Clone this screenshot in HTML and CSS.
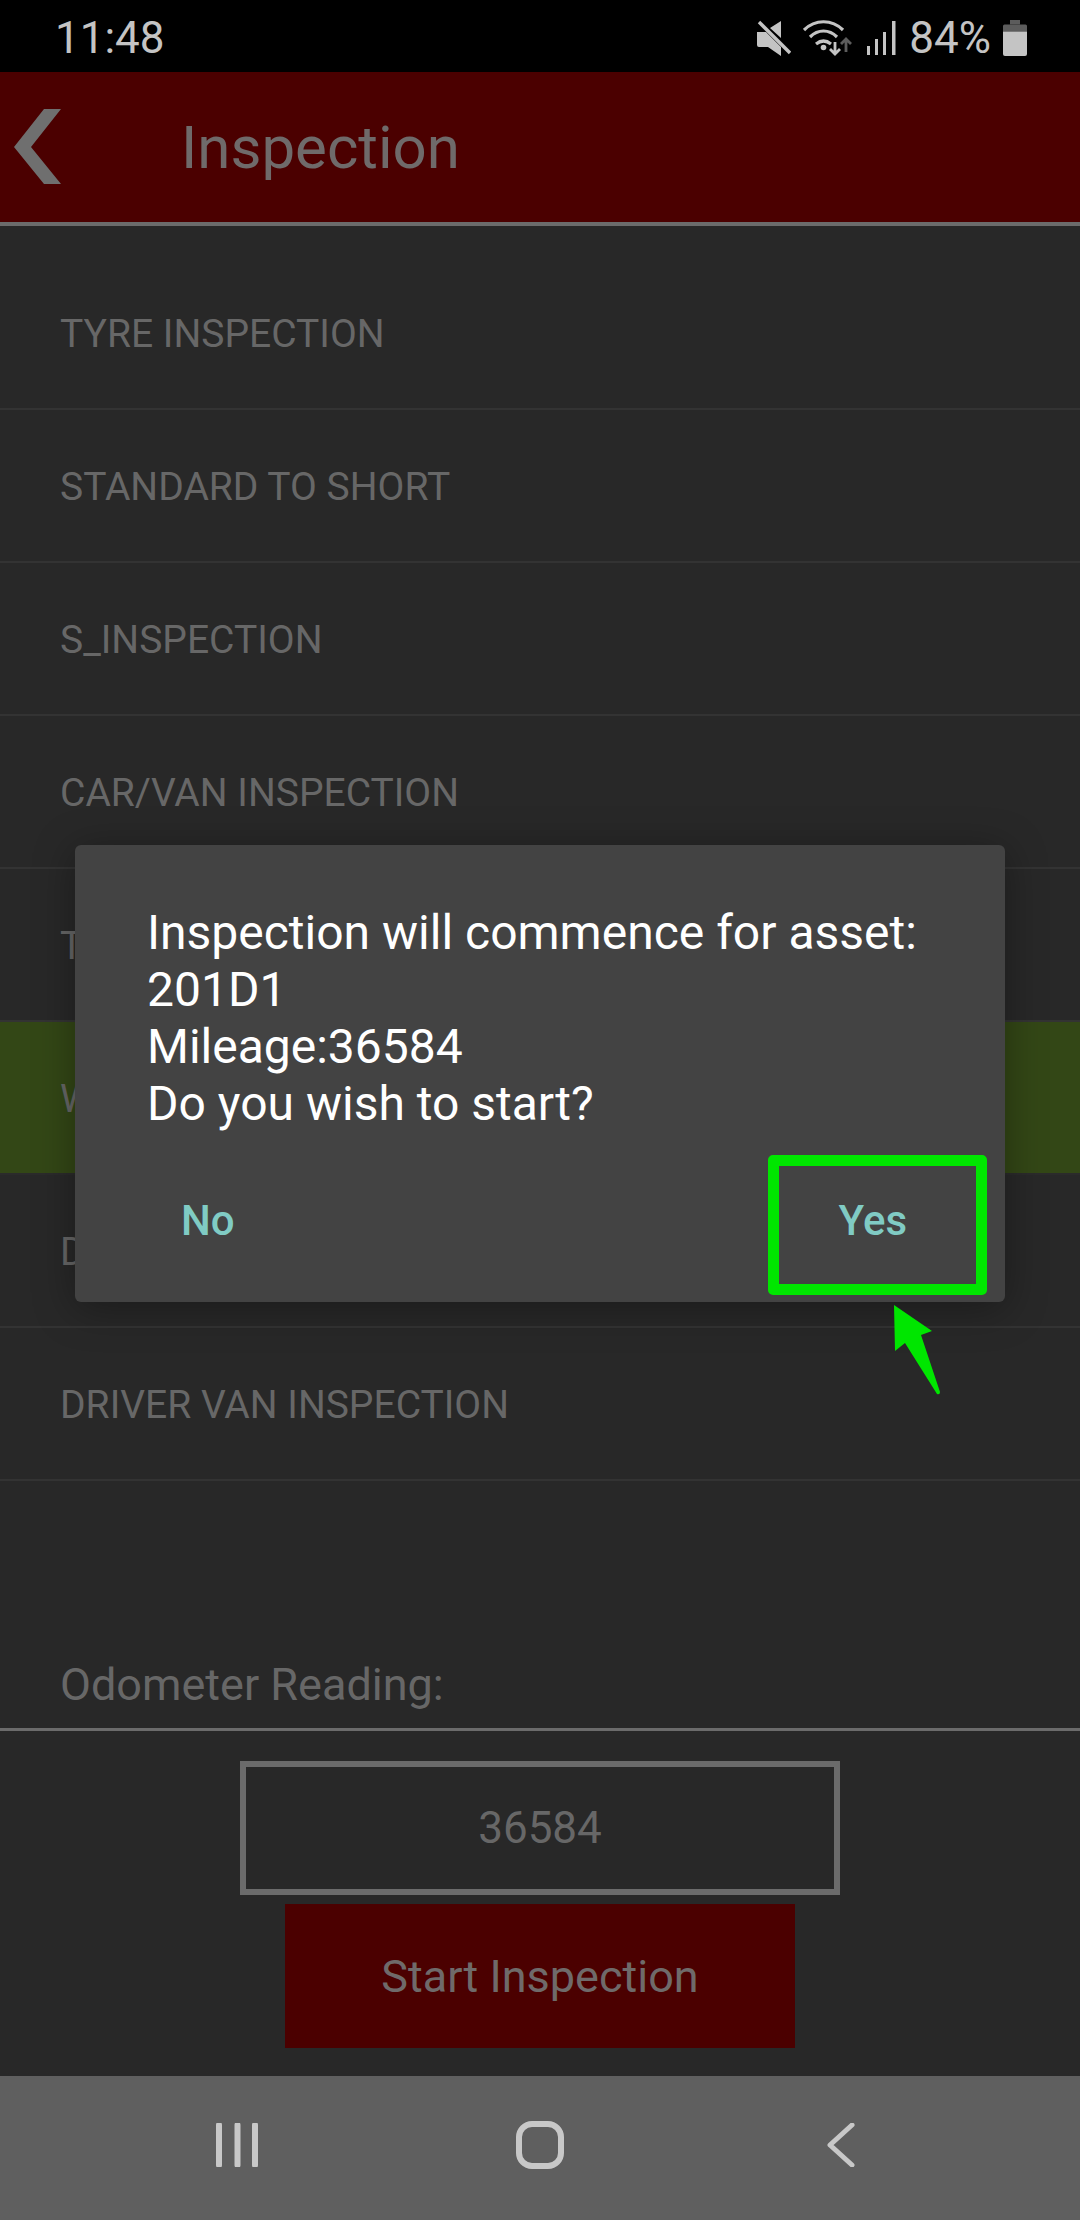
FILE: index.html
```html
<!DOCTYPE html>
<html lang="en">
<head>
  <meta charset="UTF-8">
  <meta name="viewport" content="width=device-width, initial-scale=1">
  <title>Inspection</title>
  <link rel="stylesheet" href="styles.css">
</head>
<body>
  <div class="screen">
    <!-- status bar -->
    <div class="statusbar">
      <span class="clock">11:48</span>
      <div class="status-icons">
        <svg class="ic-mute" width="34" height="36" viewBox="0 0 34 36">
          <path d="M0 12h9l15 15v9l-13-9H2a2 2 0 0 1-2-2zM13 8L24 1v17z" fill="#c4c4c4"/>
          <path d="M2 2l31 31" stroke="#c4c4c4" stroke-width="3.4" fill="none"/>
        </svg>
        <svg class="ic-wifi" width="50" height="36" viewBox="0 0 50 36">
          <path d="M1 10C12-1 29-1 40 10M7 17c8-8 19-8 27 0M13 24c5-4 10-4 15 0" stroke="#c4c4c4" stroke-width="3.2" fill="none"/>
          <circle cx="20.500" cy="27.500" r="2.800" fill="#c4c4c4"/>
          <path d="M32 22v10M27 29l5 5 5-5" stroke="#c4c4c4" stroke-width="2.800" fill="none"/>
          <path d="M43 32V20M38 24l5-5 5 5" stroke="#5c5c5c" stroke-width="2.800" fill="none"/>
        </svg>
        <svg class="ic-signal" width="32" height="36" viewBox="0 0 32 36">
          <path d="M2 26h3v9H2zM10 19h3v16h-3zM18 12h3v23h-3zM27 1h3.500v34H27z" fill="#c4c4c4"/>
        </svg>
        <span class="battery-pct">84%</span>
        <svg class="ic-battery" width="24" height="36" viewBox="0 0 24 36">
          <path d="M7 0h10v4.500H7z" fill="#5c5c5c"/>
          <path d="M0 6a1.500 1.500 0 0 1 1.500-1.500h21A1.500 1.500 0 0 1 24 6v5.500H0z" fill="#5c5c5c"/>
          <path d="M0 11.500h24V34a2 2 0 0 1-2 2H2a2 2 0 0 1-2-2z" fill="#c4c4c4"/>
        </svg>
      </div>
    </div>

    <!-- header -->
    <header class="topbar">
      <svg class="back" width="48" height="76" viewBox="0 0 48 76">
        <path d="M47 0H30L0 38l30 37h17L17 38z" fill="#6f6f6f"/>
      </svg>
      <h1>Inspection</h1>
    </header>

    <!-- list of inspections -->
    <ul class="list">
      <li>TYRE INSPECTION</li>
      <li>STANDARD TO SHORT</li>
      <li>S_INSPECTION</li>
      <li>CAR/VAN INSPECTION</li>
      <li>TRUCK INSPECTION</li>
      <li class="selected">WEEKLY INSPECTION</li>
      <li>DRIVER INSPECTION</li>
      <li>DRIVER VAN INSPECTION</li>
    </ul>

    <div class="odo">
      <label class="odo-label">Odometer Reading:</label>
      <div class="odo-box">36584</div>
      <div class="start-btn">Start Inspection</div>
    </div>

    <!-- nav bar -->
    <nav class="navbar">
      <svg width="42" height="44" viewBox="0 0 42 44">
        <path d="M3 2v40M21.500 2v40M39 2v40" stroke="#c8c8c8" stroke-width="6" stroke-linecap="round" fill="none"/>
      </svg>
      <svg class="nav-home" width="48" height="48" viewBox="0 0 48 48">
        <rect x="3" y="3" width="42" height="42" rx="13" stroke="#c8c8c8" stroke-width="6" fill="none"/>
      </svg>
      <svg width="28" height="44" viewBox="0 0 28 44">
        <path d="M25 2L3 22l22 20" stroke="#c8c8c8" stroke-width="5" stroke-linecap="round" stroke-linejoin="round" fill="none"/>
      </svg>
    </nav>

    <!-- confirm dialog -->
    <div class="dialog">
      <p class="dialog-msg">Inspection will commence for asset:<br>201D1<br>Mileage:36584<br>Do you wish to start?</p>
      <div class="dialog-actions">
        <span class="dialog-btn">No</span>
        <span class="dialog-btn">Yes</span>
      </div>
    </div>

    <!-- annotation over the Yes button -->
    <div class="highlight"></div>
    <svg class="arrow" width="52" height="92" viewBox="0 0 52 92">
      <path d="M3 1L41 27 30 31 49 88Q49 91 46 90L14 39 4 47Z" fill="#00e600"/>
    </svg>
  </div>
</body>
</html>
```

FILE: styles.css
```css
* {box-sizing:border-box;margin:0;padding:0;}
body {background:#282828;font-family:'Roboto',sans-serif;}

.screen {position:relative;width:1080px;height:2220px;overflow:hidden;display:flex;flex-direction:column;background:#282828;}

.statusbar {height:72px;background:#000;color:#c4c4c4;display:flex;align-items:center;justify-content:space-between;padding:3px 53px 0 55px;}
.clock {font-size:44px;}
.status-icons {display:flex;align-items:center;gap:12px;}
.battery-pct {font-size:44px;}

.topbar {height:154px;background:#4b0000;border-bottom:4px solid #6b6b6b;display:flex;align-items:center;padding:0 0 0 14px;}
.back {flex:none;}
.topbar h1 {font-size:60px;font-weight:400;color:#6f6a6a;margin-left:119px;}

.list {list-style:none;padding-top:31px;}
.list li {height:153px;display:flex;align-items:center;padding:2px 60px 0;font-size:39px;color:#676767;border-bottom:2px solid #333;}
.list li.selected {background:#334716;border-bottom-color:#2b2b2b;}

.odo {flex:1;display:flex;flex-direction:column;align-items:center;}
.odo-label {align-self:stretch;height:250px;display:flex;align-items:flex-end;padding:0 60px 17px;font-size:45px;color:#676767;border-bottom:3px solid #6b6b6b;}
.odo-box {width:600px;height:134px;margin-top:30px;border:6px solid #6b6b6b;display:flex;align-items:center;justify-content:center;font-size:44px;color:#676767;}
.start-btn {width:510px;height:144px;margin-top:9px;background:#4b0000;display:flex;align-items:center;justify-content:center;font-size:45px;color:#6f6a6a;}

.navbar {height:144px;background:#5f5f5f;display:flex;align-items:center;padding:0 225px 6px 216px;justify-content:space-between;}
.nav-home {margin-left:-6px;}

.dialog {position:absolute;left:75px;top:845px;width:930px;height:457px;background:#434343;border-radius:6px;box-shadow:0 6px 40px rgba(0,0,0,.35);display:flex;flex-direction:column;}
.dialog-msg {padding:59px 60px 0 72px;font-size:48px;line-height:57px;color:#fff;}
.dialog-actions {display:flex;justify-content:space-between;padding:0 98px 0 106px;margin-top:64px;}
.dialog-btn {font-size:42px;font-weight:500;color:#80cbc4;}

.highlight {position:absolute;left:768px;top:1155px;width:219px;height:140px;border:11px solid #00e600;border-radius:5px;}
.arrow {position:absolute;left:891px;top:1304px;}
```
